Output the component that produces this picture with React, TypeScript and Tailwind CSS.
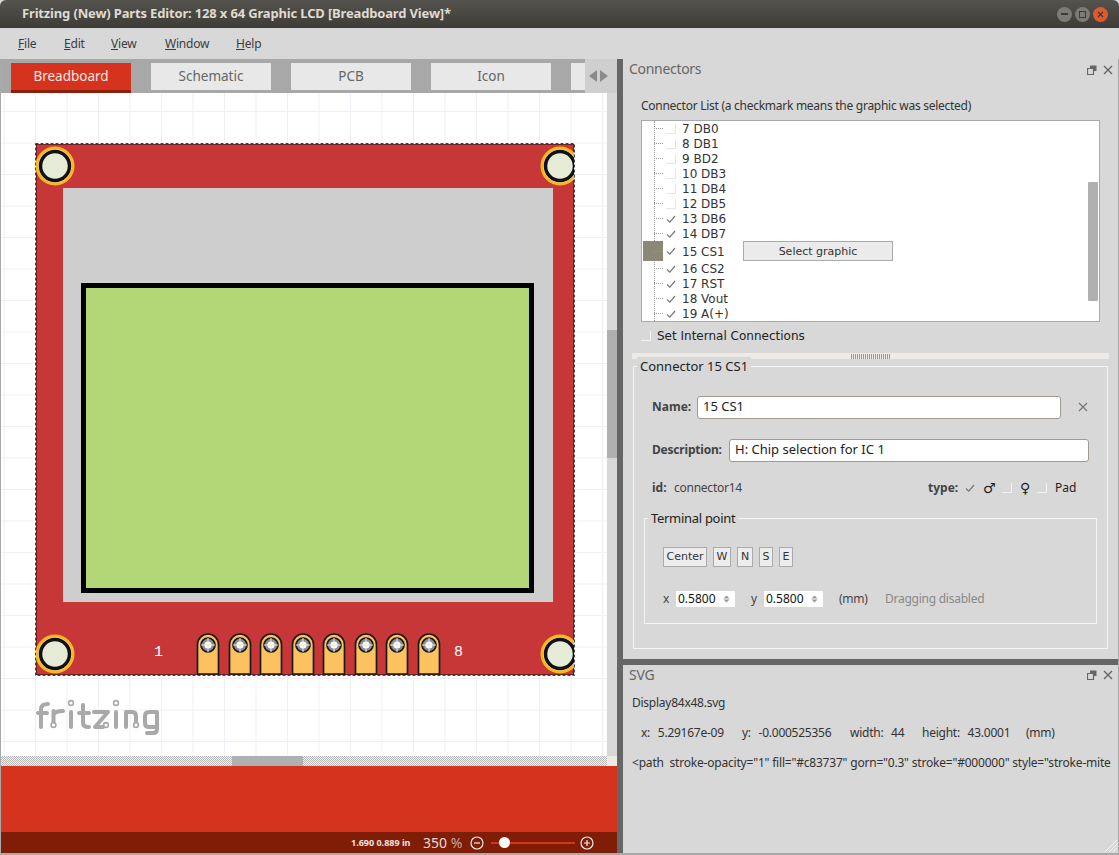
import React from 'react';

const UI = "font-['Noto_Sans','Open_Sans',sans-serif]";
const LIST = "font-['DejaVu_Sans',sans-serif]";

const pinXs = [208, 240, 271, 303, 334, 366, 397, 429];

const connectors = [
  { label: '7 DB0', on: false },
  { label: '8 DB1', on: false },
  { label: '9 BD2', on: false },
  { label: '10 DB3', on: false },
  { label: '11 DB4', on: false },
  { label: '12 DB5', on: false },
  { label: '13 DB6', on: true },
  { label: '14 DB7', on: true },
  { label: '15 CS1', on: true, active: true },
  { label: '16 CS2', on: true },
  { label: '17 RST', on: true },
  { label: '18 Vout', on: true },
  { label: '19 A(+)', on: true },
];

function Check() {
  return (
    <svg width="10" height="10" viewBox="0 0 10 10" className="shrink-0">
      <path d="M1 5.5 L3.8 8.2 L9 2" fill="none" stroke="#777" strokeWidth="1.2" />
    </svg>
  );
}

function EmptyBox({ light }: { light?: boolean }) {
  return (
    <div className={`w-[10px] h-[10px] shrink-0 border-r border-b ${light ? 'border-[#f2f2f2]' : 'border-[#e6e6e6]'}`} />
  );
}

function DockButtons() {
  return (
    <div className="flex items-center gap-[6px]">
      <svg width="10" height="10" viewBox="0 0 10 10">
        <path d="M3 0.5 H9.5 V6 H7 V3 H3 Z" fill="#666" />
        <path d="M0.5 3.5 H6.5 V9.5 H0.5 Z" fill="#d8d8d8" stroke="#666" strokeWidth="1.2" />
      </svg>
      <svg width="10" height="10" viewBox="0 0 10 10">
        <path d="M1 1 L9 9 M9 1 L1 9" stroke="#666" strokeWidth="1.4" />
      </svg>
    </div>
  );
}

function Pin({ x }: { x: number }) {
  return (
    <g>
      <path
        d={`M${x - 10.5} 674 V644.5 A10.5 10.5 0 0 1 ${x + 10.5} 644.5 V674 Z`}
        fill="#fcc25f"
        stroke="#1a1a1a"
        strokeWidth="1.7"
      />
      <circle cx={x} cy={645} r="7" fill="#8f8f8f" stroke="#1a1a1a" strokeWidth="1.7" />
      <circle cx={x} cy={645} r="3.6" fill="#fff" />
      <path d={`M${x - 7} 645 H${x + 7} M${x} 638 V652`} stroke="#e8e8e8" strokeWidth="1" />
    </g>
  );
}

function Hole({ x, y }: { x: number; y: number }) {
  return (
    <g>
      <circle cx={x} cy={y} r="18" fill="#fff" stroke="#fbb81d" strokeWidth="3" />
      <circle cx={x} cy={y} r="14.5" fill="#e6ebd8" stroke="#111" strokeWidth="3.5" />
    </g>
  );
}

function Board() {
  return (
    <svg width="540" height="534" viewBox="35 143 540 534" className="shrink-0">
      <rect x="36" y="144" width="538" height="531" fill="#c83737" stroke="#111" strokeWidth="1" />
      <rect x="63" y="188" width="490" height="414" fill="#cecece" />
      <rect x="83.5" y="285.5" width="448" height="305" fill="#b3d777" stroke="#000" strokeWidth="5" />
      <Hole x={55} y={166} />
      <Hole x={560} y={166} />
      <Hole x={55} y={654} />
      <Hole x={560} y={654} />
      {pinXs.map((x) => (
        <Pin key={x} x={x} />
      ))}
      <text x="154" y="656" fontFamily="Liberation Mono" fontSize="15" fill="#fff">1</text>
      <text x="454" y="656" fontFamily="Liberation Mono" fontSize="15" fill="#fff">8</text>
      {/* selection outline */}
      <rect x="35.5" y="143.5" width="539" height="532" fill="none" stroke="#fff" strokeWidth="1" />
      <rect x="35.5" y="143.5" width="539" height="532" fill="none" stroke="#444" strokeWidth="1" strokeDasharray="3 2" />
    </svg>
  );
}

function FritzingLogo() {
  return (
    <svg width="126" height="40" viewBox="34 698 126 40" className="shrink-0">
      <g fill="none" stroke="#a9a9a9" strokeWidth="4" strokeLinecap="round" strokeLinejoin="round">
        <path d="M40 727 V709 Q40 704 47 704 M37 713 H46" />
        <path d="M52.5 722 V711 M52.5 715 Q54 711 62 711" />
        <path d="M70 712 V727" />
        <path d="M82 705 V723 Q82 727 88 727 M78 713 H88" />
        <path d="M93 712 H107 L94 727 H102" />
        <path d="M115 712 V727" />
        <path d="M125 727 V712 H131 Q135 712 135 716 V721" />
        <path d="M156 712 H148 Q144 712 144 716 V723 Q144 727 148 727 H156 M156 712 V729 Q156 733 152 733 H146" />
      </g>
      <g fill="#fff" stroke="#a9a9a9" strokeWidth="1.6">
        <circle cx="52.5" cy="725" r="2.4" />
        <circle cx="105" cy="725" r="2.4" />
        <circle cx="135" cy="725" r="2.4" />
        <circle cx="70" cy="703" r="2.4" />
        <circle cx="115" cy="703" r="2.4" />
      </g>
    </svg>
  );
}

function Spin({ value }: { value: string }) {
  return (
    <div className="w-[59px] h-[16px] bg-white flex items-center pl-[2px] text-[12px] tracking-normal text-[#111]">
      <span className="w-[45px]">{value}</span>
      <svg width="7" height="8" viewBox="0 0 7 8">
        <path d="M3.5 0.5 L6.5 3.6 H0.5 Z M3.5 7.5 L6.5 4.4 H0.5 Z" fill="#999" />
      </svg>
    </div>
  );
}

function SmallBtn({ label, w }: { label: string; w: string }) {
  return (
    <div className={`${w} h-[20px] flex items-center justify-center bg-[#ededed] border border-[#aaa] text-[11px] text-[#333] ${LIST}`}>
      {label}
    </div>
  );
}

export default function App() {
  return (
    <div className={`w-[1119px] h-[855px] flex flex-col overflow-hidden bg-[#d8d8d8] ${UI}`}>
      {/* title bar */}
      <div className="h-[28px] shrink-0 rounded-t-[6px] bg-gradient-to-b from-[#55534d] to-[#3d3c37] flex items-center pl-[22px] pr-[11px]">
        <span className="text-[13px] tracking-[-0.16px] font-bold text-[#dfdbd2] flex-1 whitespace-nowrap">
          Fritzing (New) Parts Editor: 128 x 64 Graphic LCD [Breadboard View]*
        </span>
        <div className="flex gap-[3px]">
          <div className="w-[15px] h-[15px] rounded-full bg-[#7d7b75] flex items-center justify-center">
            <div className="w-[7px] h-[1.5px] bg-[#3c3b37]" />
          </div>
          <div className="w-[15px] h-[15px] rounded-full bg-[#7d7b75] flex items-center justify-center">
            <div className="w-[7px] h-[7px] border border-[#3c3b37]" />
          </div>
          <div className="w-[15px] h-[15px] rounded-full bg-[#e2582a] flex items-center justify-center">
            <svg width="7" height="7" viewBox="0 0 7 7">
              <path d="M1 1 L6 6 M6 1 L1 6" stroke="#3c3b37" strokeWidth="1.2" />
            </svg>
          </div>
        </div>
      </div>

      {/* menu */}
      <div className="h-[31px] shrink-0 flex items-center text-[12px] tracking-[-0.2px] text-[#3c3c3c] pl-[18px]">
        <span className="w-[46px]"><u>F</u>ile</span>
        <span className="w-[47px]"><u>E</u>dit</span>
        <span className="w-[54px]"><u>V</u>iew</span>
        <span className="w-[71px]"><u>W</u>indow</span>
        <span><u>H</u>elp</span>
      </div>

      <div className="flex-1 min-h-0 flex border-b-2 border-[#aaa]">
        {/* left column */}
        <div className="w-[617px] shrink-0 flex flex-col border-l border-[#aaa]">
          <div className="h-[34px] shrink-0 bg-[#a8a8a8] flex items-start pt-[4px] pl-[10px] gap-[20px] text-[13.5px] relative overflow-hidden">
            <div className="w-[120px] h-[30px] bg-[#d6331f] border-b-[3px] border-[#8a1f0a] text-[#f2e6e0] flex items-center justify-center">Breadboard</div>
            <div className="w-[120px] h-[27px] bg-[#e8e8e8] text-[#666] flex items-center justify-center">Schematic</div>
            <div className="w-[120px] h-[27px] bg-[#e8e8e8] text-[#666] flex items-center justify-center">PCB</div>
            <div className="w-[120px] h-[27px] bg-[#e8e8e8] text-[#666] flex items-center justify-center">Icon</div>
            <div className="w-[14px] h-[27px] bg-[#e8e8e8]" />
            <div className="absolute right-0 top-0 w-[32px] h-[34px] bg-[#cfcfcf] flex items-center pl-[4px] gap-[3px]">
              <svg width="8" height="12" viewBox="0 0 8 12"><path d="M8 0 V12 L0 6 Z" fill="#8a8a8a" /></svg>
              <svg width="8" height="12" viewBox="0 0 8 12"><path d="M0 0 V12 L8 6 Z" fill="#8a8a8a" /></svg>
            </div>
          </div>

          <div className="flex-1 min-h-0 flex">
            <div className="w-[606px] h-[663px] shrink-0 overflow-hidden bg-white bg-[linear-gradient(#eef0f5_1px,transparent_1px),linear-gradient(90deg,#eef0f5_1px,transparent_1px)] bg-[size:31.5px_31.5px] bg-[position:2.5px_18px] pl-[34px] pt-[50px] flex flex-col">
              <Board />
              <div className="mt-[21px]">
                <FritzingLogo />
              </div>
            </div>
            <div className="w-[10px] h-[663px] shrink-0 flex flex-col pt-[237px]">
              <div className="h-[128px] bg-[#b0b0b0]" />
            </div>
          </div>

          <div className="h-[10px] shrink-0 flex">
            <div className="w-[606px] bg-[repeating-conic-gradient(#b9b9b9_0_25%,#f0f0f0_0_50%)] bg-[size:2px_2px] pl-[231px]">
              <div className="w-[71px] h-[10px] bg-[#b0b0b0] rounded-t-[1px]" />
            </div>
            <div className="flex-1 bg-[#eeebe6]" />
          </div>
          <div className="h-[66px] shrink-0 bg-[#d6331f]" />
          <div className="h-[21px] shrink-0 bg-[#7f1d07] flex items-center text-white pl-[350px]">
            <span className="text-[9px] font-bold w-[72px] text-[#f0e4e0]">1.690 0.889 in</span>
            <span className="text-[14px] text-[#eedcd6] w-[47px]">350 <span className="text-[#c9a79c]">%</span></span>
            <svg width="14" height="14" viewBox="0 0 14 14" className="shrink-0">
              <circle cx="7" cy="7" r="6" fill="none" stroke="#eee" strokeWidth="1.2" />
              <path d="M4 7 H10" stroke="#eee" strokeWidth="1.2" />
            </svg>
            <div className="relative w-[84px] h-[2px] ml-[7px] bg-[#d6331f]">
              <div className="absolute left-[8px] -top-[5px] w-[11px] h-[11px] rounded-full bg-white" />
            </div>
            <svg width="14" height="14" viewBox="0 0 14 14" className="ml-[5px] shrink-0">
              <circle cx="7" cy="7" r="6" fill="none" stroke="#eee" strokeWidth="1.2" />
              <path d="M4 7 H10 M7 4 V10" stroke="#eee" strokeWidth="1.2" />
            </svg>
          </div>
        </div>

        {/* dock divider */}
        <div className="w-[6px] shrink-0 bg-[#666]" />

        {/* right column */}
        <div className="flex-1 min-w-0 flex flex-col border-r border-[#aaa]">
          {/* Connectors panel */}
          <div className="h-[600px] shrink-0 flex flex-col">
            <div className="h-[21px] shrink-0 flex items-center justify-between pl-[6px] pr-[5px]">
              <span className="text-[14px] tracking-[-0.3px] text-[#666] pb-[2px]">Connectors</span>
              <DockButtons />
            </div>
            <div className="pl-[18px] pt-[16px] text-[12px] tracking-[-0.27px] leading-[20px] text-[#333]">
              Connector List (a checkmark means the graphic was selected)
            </div>
            <div className={`relative ml-[18px] mt-[4px] w-[459px] h-[202px] bg-white border border-[#aaa] overflow-hidden text-[12px] text-[#333] ${LIST}`}>
              <div className="absolute left-[12px] top-0 bottom-0 border-l border-dotted border-[#999]" />
              <div className="absolute right-[1px] top-[61px] w-[10px] h-[119px] bg-[#b0b0b0] rounded-[1px]" />
              {connectors.map((c) => (
                <div key={c.label} className={`flex items-center pl-[12px] ${c.active ? 'h-[20px]' : 'h-[15px]'}`}>
                  {c.active && <div className="absolute left-[1px] w-[20px] h-[20px] bg-[#8c8877]" />}
                  <div className="relative w-[9px] border-t border-dotted border-[#999] mr-[3px]" />
                  {c.on ? <Check /> : <EmptyBox />}
                  <span className="ml-[6px] pt-[2px] leading-[15px] w-[61px]">{c.label}</span>
                  {c.active && (
                    <div className="w-[150px] h-[20px] pt-[2px] flex items-center justify-center bg-[#ebebeb] border border-[#aaa] text-[11px]">
                      Select graphic
                    </div>
                  )}
                </div>
              ))}
            </div>
            <div className={`flex items-center pl-[18px] h-[20px] mt-[4px] text-[12px] text-[#222] ${LIST}`}>
              <EmptyBox light />
              <span className="ml-[6px]">Set Internal Connections</span>
            </div>
            <div className="ml-[9px] mr-[9px] mt-[7px] h-[6px] bg-[#eeebe6] flex justify-center items-center">
              <div className="w-[40px] h-[5px] bg-[repeating-linear-gradient(90deg,#999_0_1px,transparent_1px_2px)]" />
            </div>

            {/* Connector group */}
            <div className="relative ml-[10px] mr-[10px] mt-[7px] h-[283px] border border-[#f4f4f4] px-[18px] pt-[28px]">
              <div className="absolute left-[3px] -top-[10px] px-[3px] bg-[#d8d8d8] text-[13px] leading-[18px] text-[#222]">Connector 15 CS1</div>
              <div className="flex items-center h-[24px] text-[12px]">
                <span className="font-bold text-[#444] w-[45px]">Name:</span>
                <div className="w-[364px] h-[23px] bg-white border border-[#a09a90] rounded-[3px] flex items-center pl-[5px] text-[13px] text-[#222]">15 CS1</div>
                <svg width="10" height="10" viewBox="0 0 10 10" className="ml-[17px]">
                  <path d="M1 1 L9 9 M9 1 L1 9" stroke="#777" strokeWidth="1.2" />
                </svg>
              </div>
              <div className="flex items-center h-[24px] mt-[19px] text-[12px]">
                <span className="font-bold tracking-[-0.2px] text-[#444] w-[77px]">Description:</span>
                <div className="w-[360px] h-[23px] bg-white border border-[#a09a90] rounded-[3px] flex items-center pl-[5px] text-[13px] text-[#222]">H: Chip selection for IC 1</div>
              </div>
              <div className="flex items-center h-[20px] mt-[16px] text-[12px] text-[#444]">
                <span className="font-bold w-[22px]">id:</span>
                <span className="w-[254px] tracking-[-0.25px]">connector14</span>
                <span className="font-bold w-[37px]">type:</span>
                <div className="mr-[8px]"><Check /></div>
                <span className={`text-[14px] w-[19px] text-[#222] ${LIST}`}>♂</span>
                <EmptyBox light />
                <span className={`text-[14px] w-[17px] ml-[8px] text-[#222] ${LIST}`}>♀</span>
                <EmptyBox light />
                <span className="ml-[8px] text-[#222]">Pad</span>
              </div>

              {/* Terminal point group */}
              <div className="relative -ml-[8px] mt-[20px] w-[453px] h-[106px] border border-[#f4f4f4] pl-[18px] pt-[28px]">
                <div className="absolute left-[3px] -top-[10px] px-[3px] bg-[#d8d8d8] text-[13px] tracking-[-0.3px] leading-[18px] text-[#222]">Terminal point</div>
                <div className="flex gap-[6px]">
                  <SmallBtn label="Center" w="w-[44px]" />
                  <SmallBtn label="W" w="w-[18px]" />
                  <SmallBtn label="N" w="w-[16px]" />
                  <SmallBtn label="S" w="w-[14px]" />
                  <SmallBtn label="E" w="w-[14px]" />
                </div>
                <div className="flex items-center mt-[23px] text-[12px] tracking-[-0.25px] text-[#444]">
                  <span className="w-[13px]">x</span>
                  <Spin value="0.5800" />
                  <span className="w-[13px] ml-[16px]">y</span>
                  <Spin value="0.5800" />
                  <span className="ml-[16px] w-[46px]">(mm)</span>
                  <span className="text-[#888]">Dragging disabled</span>
                </div>
              </div>
            </div>
          </div>

          <div className="h-[6px] shrink-0 bg-[#666]" />

          {/* SVG panel */}
          <div className="relative flex-1 min-h-0 flex flex-col text-[12px] tracking-[-0.25px] text-[#333]">
            <div className="h-[20px] shrink-0 flex items-center justify-between pl-[6px] pr-[5px]">
              <span className="text-[14px] text-[#666] pb-[2px]">SVG</span>
              <DockButtons />
            </div>
            <div className="pl-[9px] pt-[8px] leading-[20px]">Display84x48.svg</div>
            <div className="pl-[18px] pt-[10px] leading-[20px] flex whitespace-pre [word-spacing:1px]">
              <span className="w-[101px]">x:  5.29167e-09</span>
              <span className="w-[108px]">y:  -0.000525356</span>
              <span className="w-[72px]">width:  44</span>
              <span className="w-[104px]">height:  43.0001</span>
              <span>(mm)</span>
            </div>
            <div className="pl-[9px] pt-[10px] leading-[20px] tracking-[-0.2px] whitespace-pre overflow-hidden">
              {'<path  stroke-opacity="1" fill="#c83737" gorn="0.3" stroke="#000000" style="stroke-mite'}
            </div>
            <svg width="14" height="14" viewBox="0 0 14 14" className="absolute right-[1px] bottom-[1px]">
              <path d="M14 2 L2 14 M14 6 L6 14 M14 10 L10 14" stroke="#f2f2f2" strokeWidth="1" />
            </svg>
          </div>
        </div>
      </div>
    </div>
  );
}
